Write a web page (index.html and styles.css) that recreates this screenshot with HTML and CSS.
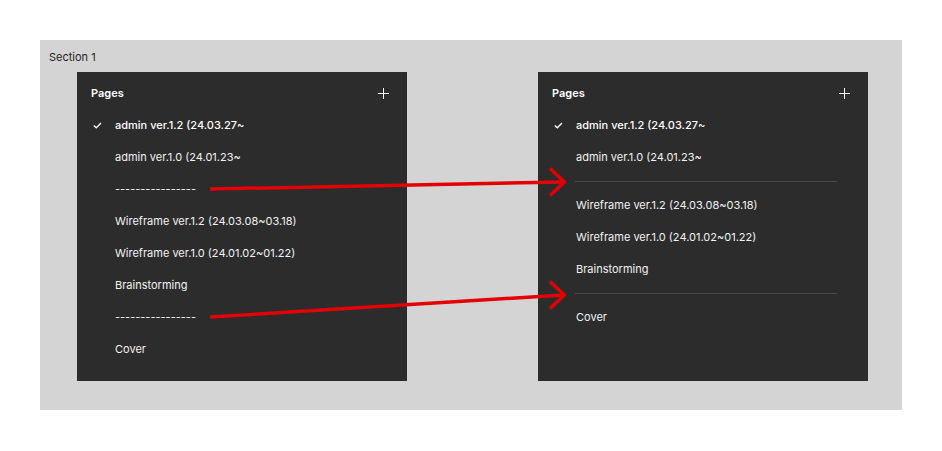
FILE: index.html
```html
<!DOCTYPE html>
<html>
<head>
<meta charset="utf-8">
<link rel="stylesheet" href="styles.css">
</head>
<body>
<div class="canvas">
  <div class="section">
    <div class="section-label">Section 1</div>
    <div class="panels">
      <div class="panel">
        <div class="panel-head">
          <span class="title">Pages</span>
          <svg class="plus" width="11" height="11" viewBox="0 0 11 11"><path d="M5.5 0V11M0 5.5H11" stroke="#fff" stroke-width="1"/></svg>
        </div>
        <div class="row selected"><span class="check"><svg width="9" height="7" viewBox="0 0 9 7"><path d="M0.8 3.4L3.3 5.8L8 1" fill="none" stroke="#fff" stroke-width="1.4"/></svg></span>admin ver.1.2 (24.03.27~</div>
        <div class="row"><span class="check"></span>admin ver.1.0 (24.01.23~</div>
        <div class="row"><span class="check"></span>----------------</div>
        <div class="row"><span class="check"></span>Wireframe ver.1.2 (24.03.08~03.18)</div>
        <div class="row"><span class="check"></span>Wireframe ver.1.0 (24.01.02~01.22)</div>
        <div class="row"><span class="check"></span>Brainstorming</div>
        <div class="row"><span class="check"></span>----------------</div>
        <div class="row"><span class="check"></span>Cover</div>
      </div>
      <div class="panel">
        <div class="panel-head">
          <span class="title">Pages</span>
          <svg class="plus" width="11" height="11" viewBox="0 0 11 11"><path d="M5.5 0V11M0 5.5H11" stroke="#fff" stroke-width="1"/></svg>
        </div>
        <div class="row selected"><span class="check"><svg width="9" height="7" viewBox="0 0 9 7"><path d="M0.8 3.4L3.3 5.8L8 1" fill="none" stroke="#fff" stroke-width="1.4"/></svg></span>admin ver.1.2 (24.03.27~</div>
        <div class="row"><span class="check"></span>admin ver.1.0 (24.01.23~</div>
        <div class="sep"><div class="sep-line"></div></div>
        <div class="row"><span class="check"></span>Wireframe ver.1.2 (24.03.08~03.18)</div>
        <div class="row"><span class="check"></span>Wireframe ver.1.0 (24.01.02~01.22)</div>
        <div class="row"><span class="check"></span>Brainstorming</div>
        <div class="sep"><div class="sep-line"></div></div>
        <div class="row"><span class="check"></span>Cover</div>
      </div>
    </div>
  </div>
  <svg class="arrows" width="942" height="451" viewBox="0 0 942 451">
    <g stroke="#e50000" stroke-width="3.5" fill="none" stroke-linejoin="round">
      <line x1="210" y1="189" x2="563" y2="182"/>
      <polyline points="550,168.5 564.5,182 550,195.5"/>
      <line x1="210" y1="317" x2="563" y2="295"/>
      <polyline points="550,281.5 564.5,295 550,308.5"/>
    </g>
  </svg>
</div>
</body>
</html>
```

FILE: styles.css
```css
html, body {
  margin: 0;
  padding: 0;
  background: #ffffff;
}
.canvas {
  position: relative;
  width: 942px;
  height: 451px;
  padding: 40px 0 0 40px;
  box-sizing: border-box;
  font-family: Inter, "Liberation Sans", sans-serif;
  font-size: 11px;
}
.section {
  width: 862px;
  height: 370px;
  background: #d4d4d4;
  box-sizing: border-box;
  padding: 10px 0 0 9px;
}
.section-label {
  color: #262626;
  line-height: 14px;
  height: 22px;
}
.panels {
  display: flex;
  gap: 131px;
  padding-left: 28px;
}
.panel {
  width: 330px;
  height: 309px;
  background: #2c2c2c;
  color: #f2f2f2;
}
.panel-head {
  display: flex;
  justify-content: space-between;
  align-items: center;
  height: 16px;
  padding: 13px 18px 8px 14px;
}
.title {
  font-weight: 600;
  color: #ffffff;
}
.plus {
  display: block;
}
.row {
  display: flex;
  align-items: center;
  height: 32px;
  line-height: 16px;
  white-space: nowrap;
}
.row.selected {
  font-weight: 500;
  color: #ffffff;
}
.check {
  width: 38px;
  box-sizing: border-box;
  padding-left: 16px;
  display: flex;
  align-items: center;
}
.check svg {
  display: block;
}
.sep {
  height: 16px;
  display: flex;
  align-items: center;
  padding: 0 31px 0 37px;
}
.sep-line {
  flex: 1;
  height: 1px;
  background: #474747;
}
.arrows {
  position: absolute;
  left: 0;
  top: 0;
  pointer-events: none;
}
```
